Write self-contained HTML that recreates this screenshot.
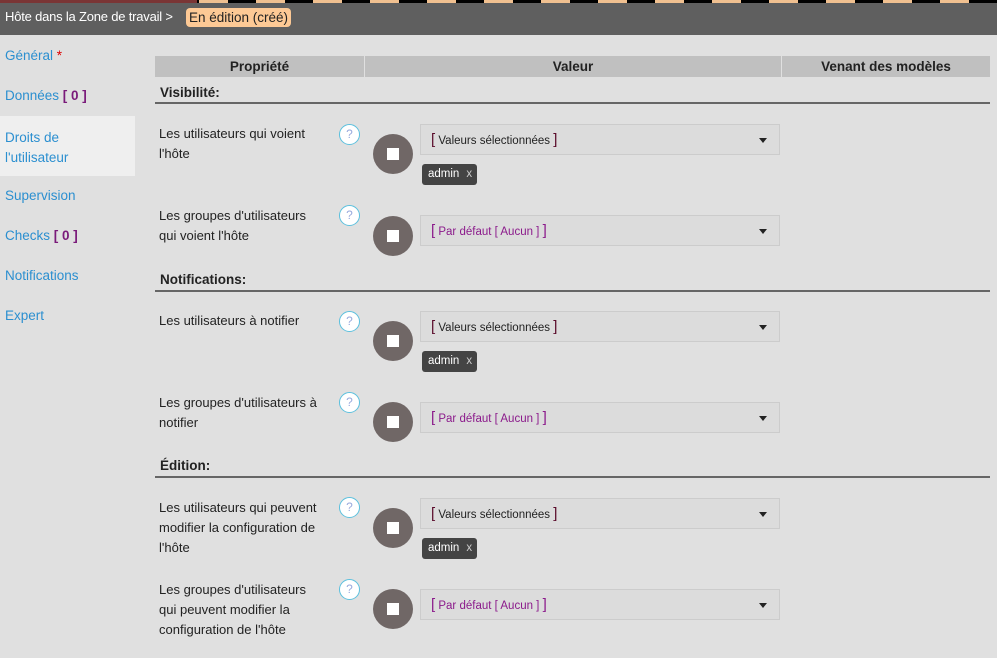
<!DOCTYPE html><html><head><meta charset="utf-8"><style>
*{margin:0;padding:0;box-sizing:border-box}
body{width:997px;height:658px;background:#e0e0e0;font-family:"Liberation Sans",sans-serif;font-size:13px;color:#222;position:relative;overflow:hidden}
.a{position:absolute}
.top{left:0;top:0;width:997px;height:35px;background:#5f5f5f}
.strip{left:0;top:0;width:997px;height:3px;background:repeating-linear-gradient(90deg,#000 0 28px,#f0c090 28px 57px)}
.nav{color:#2b8fd0;font-size:13.5px;left:5px}
.pur{color:#7a1a7a;font-weight:bold}
.th{top:56px;height:21px;background:#c0c0c0;font-weight:bold;text-align:center;line-height:21px;font-size:13.5px}
.sec{left:160px;font-weight:bold;font-size:13.5px}
.line{left:155px;width:835px;height:2px;background:#666}
.lab{left:159px;line-height:20px;font-size:13px;width:175px}
.help{width:21px;height:21px;border:1.5px solid #5bc0de;border-radius:50%;background:#fff;color:#9ad;font-size:12px;text-align:center;line-height:18px}
.circ{width:40px;height:40px;border-radius:50%;background:#706766}
.circ:after{content:"";position:absolute;left:14px;top:14px;width:12px;height:12px;background:#fff}
.sel{left:420px;width:360px;height:31px;border:1px solid #ccc;background:#dcdcdc;font-size:11.5px;line-height:29px;padding-left:10px}
.sel:after{content:"";position:absolute;right:12px;top:13px;border:4px solid transparent;border-top:5px solid #222}
.sel b{font-weight:normal;font-size:15px;color:#5a0a2a}
.def{color:#8b1a8b}.def b{color:#8b1a8b}
.tag{left:422px;width:55px;height:21px;background:#444;color:#fff;border-radius:3px;font-size:11.5px;line-height:21px;padding-left:6px}
.tag span{color:#ccc;margin-left:7px}
</style></head><body>
<div class="a top"></div><div class="a strip"></div>
<div class="a" style="left:0;top:0;width:197px;height:3px;background:#7a3535"></div>
<div class="a" style="left:5px;top:9px;color:#fff;font-size:13px;letter-spacing:-0.2px">Hôte dans la Zone de travail &gt;</div>
<div class="a" style="left:186px;top:8px;background:#fdc995;border-radius:4px;padding:0 3px;font-size:13.5px;line-height:19px;color:#222">En édition (créé)</div>
<div class="a" style="left:0;top:116px;width:135px;height:60px;background:#efefef"></div>
<div class="a nav" style="top:48px">Général <span style="color:#d00">*</span></div>
<div class="a nav" style="top:88px">Données <span class="pur">[ 0 ]</span></div>
<div class="a nav" style="top:128px;line-height:20px">Droits de<br>l'utilisateur</div>
<div class="a nav" style="top:188px">Supervision</div>
<div class="a nav" style="top:228px">Checks <span class="pur">[ 0 ]</span></div>
<div class="a nav" style="top:268px">Notifications</div>
<div class="a nav" style="top:308px">Expert</div>
<div class="a th" style="left:155px;width:209px">Propriété</div>
<div class="a th" style="left:365px;width:416px">Valeur</div>
<div class="a th" style="left:782px;width:208px">Venant des modèles</div>
<div class="a sec" style="top:85px">Visibilité:</div><div class="a line" style="top:102px"></div>
<div class="a sec" style="top:272px">Notifications:</div><div class="a line" style="top:290px"></div>
<div class="a sec" style="top:458px">Édition:</div><div class="a line" style="top:476px"></div>

<div class="a lab" style="top:124px">Les utilisateurs qui voient<br>l'hôte</div>
<div class="a help" style="left:339px;top:124px">?</div><div class="a circ" style="left:373px;top:134px"></div>
<div class="a sel" style="top:124px"><b>[</b> Valeurs sélectionnées <b>]</b></div>
<div class="a tag" style="top:164px">admin<span>x</span></div>

<div class="a lab" style="top:206px">Les groupes d'utilisateurs<br>qui voient l'hôte</div>
<div class="a help" style="left:339px;top:205px">?</div><div class="a circ" style="left:373px;top:216px"></div>
<div class="a sel def" style="top:215px"><b>[</b> Par défaut [ Aucun ] <b>]</b></div>

<div class="a lab" style="top:311px">Les utilisateurs à notifier</div>
<div class="a help" style="left:339px;top:311px">?</div><div class="a circ" style="left:373px;top:321px"></div>
<div class="a sel" style="top:311px"><b>[</b> Valeurs sélectionnées <b>]</b></div>
<div class="a tag" style="top:351px">admin<span>x</span></div>

<div class="a lab" style="top:393px">Les groupes d'utilisateurs à<br>notifier</div>
<div class="a help" style="left:339px;top:392px">?</div><div class="a circ" style="left:373px;top:402px"></div>
<div class="a sel def" style="top:402px"><b>[</b> Par défaut [ Aucun ] <b>]</b></div>

<div class="a lab" style="top:498px">Les utilisateurs qui peuvent<br>modifier la configuration de<br>l'hôte</div>
<div class="a help" style="left:339px;top:497px">?</div><div class="a circ" style="left:373px;top:508px"></div>
<div class="a sel" style="top:498px"><b>[</b> Valeurs sélectionnées <b>]</b></div>
<div class="a tag" style="top:538px">admin<span>x</span></div>

<div class="a lab" style="top:580px">Les groupes d'utilisateurs<br>qui peuvent modifier la<br>configuration de l'hôte</div>
<div class="a help" style="left:339px;top:579px">?</div><div class="a circ" style="left:373px;top:589px"></div>
<div class="a sel def" style="top:589px"><b>[</b> Par défaut [ Aucun ] <b>]</b></div>
</body></html>
